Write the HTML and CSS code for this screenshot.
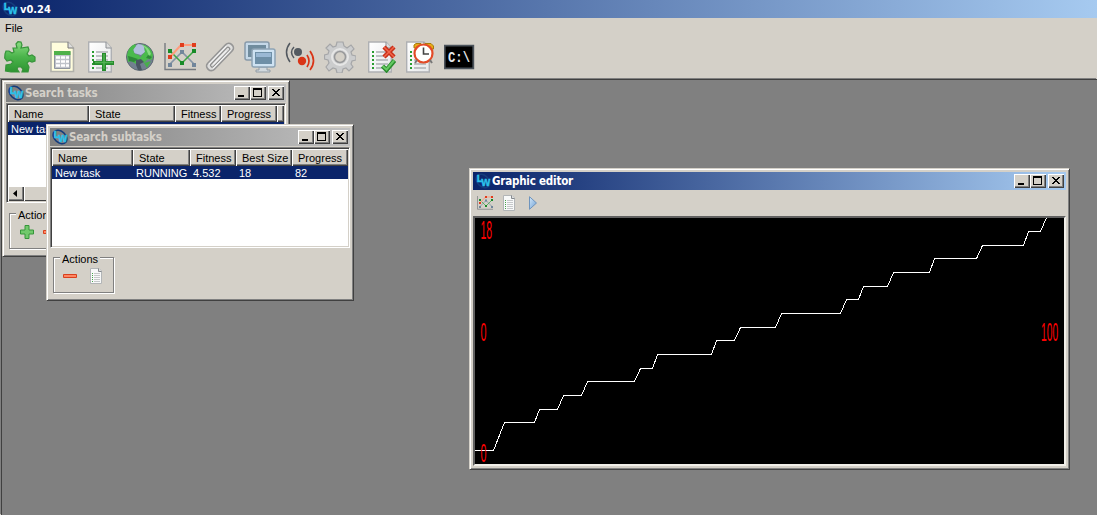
FILE: index.html
```html
<!DOCTYPE html>
<html lang="en">
<head>
<meta charset="utf-8">
<title>v0.24</title>
<link rel="stylesheet" href="styles.css">
</head>
<body>
<svg class="defs" aria-hidden="true">
  <defs>
    <linearGradient id="green" x1="0" y1="0" x2="0" y2="1"><stop offset="0" stop-color="#8bdc82"/><stop offset=".5" stop-color="#4bb44b"/><stop offset="1" stop-color="#2e9432"/></linearGradient>
    <linearGradient id="paper" x1="0" y1="0" x2="1" y2="1"><stop offset="0" stop-color="#fff"/><stop offset="1" stop-color="#e6e8ea"/></linearGradient>
    <linearGradient id="blue" x1="0" y1="0" x2="1" y2="1"><stop offset="0" stop-color="#d4e8fa"/><stop offset="1" stop-color="#6ea0d4"/></linearGradient>
    <symbol id="logo" viewBox="0 0 16 16">
      <ellipse cx="8" cy="8" rx="7.8" ry="5.6" transform="rotate(42 8 8)" fill="none" stroke="#153c7c" stroke-width="1.5"/>
      <text class="mark" x="1.500" y="9">L</text>
      <text class="mark" x="6" y="12.500" textLength="9.500" lengthAdjust="spacingAndGlyphs">W</text>
    </symbol>
    <symbol id="chart" viewBox="0 0 32 32">
      <path d="M1 2V28.500H32" fill="none" stroke="#777b80" stroke-width="1.4"/>
      <path d="M6 23L18 11L31 24" fill="none" stroke="#8494a5" stroke-width="1.600"/>
      <path d="M6 10L18 22L31 9" fill="none" stroke="#3fa545" stroke-width="1.500"/>
      <path d="M6 16L17 4H31" fill="none" stroke="#ff9b7c" stroke-width="2"/>
      <path d="M4 22h4v4H4zM16 9h4v4h-4zM28 22h4v4h-4z" fill="#71869b"/>
      <path d="M4 8h4v4H4zM16 20h4v4h-4zM28 8h4v4h-4z" fill="#188b28"/>
      <path d="M4 14h4v4H4zM16 2h4v4h-4zM28 2h4v4h-4z" fill="#e03c1c"/>
    </symbol>
    <symbol id="list" viewBox="0 0 24 32">
      <path d="M.7 1H18L23.300 7V31H.7Z" fill="url(#paper)" stroke="#aeb0b3" stroke-width="1.400"/>
      <path d="M18 1V7H23.300" fill="#ddd" stroke="#8b8f94"/>
      <path d="M4 11h2M4 15h2M4 19h2M4 23h2M4 27h2" stroke="#299c32" stroke-width="2"/>
      <path d="M8 11h12M8 15h12M8 19h12M8 23h12M8 27h12" stroke="#bec1c4" stroke-width="1.800"/>
    </symbol>
    <symbol id="list-small" viewBox="0 0 12 16">
      <path d="M.5.5H9L11.500 3V15.500H.5Z" fill="#f8f9f9" stroke="#b2b5b7"/>
      <path d="M8.500.5V3.500H11.500" fill="#ddd" stroke="#85898d"/>
      <path d="M2 5.500h1M2 7.500h1M2 9.500h1M2 11.500h1M2 13.500h1" stroke="#45a44a"/>
      <path d="M4 5.500h6M4 7.500h6M4 9.500h6M4 11.500h6M4 13.500h6" stroke="#c6c8ca"/>
    </symbol>
    <symbol id="minus" viewBox="0 0 14 4"><path d="M.5.5h13v3H.5z" fill="#ff8663" stroke="#d8401d"/></symbol>
    <symbol id="min" viewBox="0 0 16 14"><path d="M4 9h6v2H4z"/></symbol>
    <symbol id="max" viewBox="0 0 16 14"><path d="M3 2h9v9H3zM4 4v6h7V4z" fill-rule="evenodd"/></symbol>
    <symbol id="close" viewBox="0 0 16 14"><path d="M4 3h2v1h1v1h2V4h1V3h2v1h-1v1h-1v1H9v1h1v1h1v1h1v1h-2V9H9V8H7v1H6v1H4V9h1V8h1V7h1V6H6V5H5V4H4z"/></symbol>
  </defs>
</svg>
<div class="app">
  <header class="app-title"><svg class="logo"><use href="#logo"/></svg><span>v0.24</span></header>
  <nav class="menu"><span>File</span></nav>
  <div class="toolbar">
    <svg viewBox="0 0 32 32"><path d="M1 13L2 10H5L8 12L10 11L9 7H13L12 3L14 .7L17 1L18 4L17 7L24 6L25 9L23 13L25 15L28 14L31 16V20L28 21L25 20L23 22L25 26L24 31H18L19 28L17 26L14 26L13 28L15 31L7 31L1.500 30L2 24L7 23L9 21L7 19L3 20L.7 17Z" fill="url(#green)" stroke="#37943a" stroke-width="1.2"/></svg>
    <svg viewBox="0 0 32 32"><path d="M7 1H24L29.500 7V30.500H7Z" fill="#fffddc" stroke="#b1b1ab" stroke-width="1.6"/><path d="M24 1V7H29.500" fill="#ddd" stroke="#777"/><path d="M10.500 10.500H26V27.500H10.500Z" fill="#bfc3ca" stroke="#8f959f"/><path d="M10 10H26.500V14H10Z" fill="#4fb14a"/><path d="M12 16.500h4M17 16.500h4M22 16.500h3M12 20.500h4M17 20.500h4M22 20.500h3M12 24.500h4M17 24.500h4M22 24.500h3" stroke="#fff" stroke-width="2.4"/></svg>
    <svg viewBox="0 0 32 32"><use href="#list" x="4" y="0" width="24" height="32"/><path d="M20 12V30M9 22H30" stroke="#258b2b" stroke-width="4"/><path d="M20 13V28M11 21.500H29" stroke="#50b253" stroke-width="1.500"/></svg>
    <svg viewBox="0 0 32 32"><circle cx="16" cy="16" r="13.500" fill="#71808f" stroke="#5e6973"/><path d="M9 7L14 3L20 4L21 11L17 14L10 12Z" fill="#b2bfdc"/><path d="M3 14Q4 6 11 3L12 5L9 9L11 13L15 14L17 18L12 23L7 20L4 21ZM17 3Q27 5 29 14L28 19L24 18L20 22L15 19L18 14L21 11L20 5Z" fill="#4aba4d"/><path d="M18 4Q25 6 27 13L25 15L22 8Z" fill="#86da80"/><path d="M4 15L8 16L14 18L10 21L5 20ZM24 14L28 16L26 18L22 17Z" fill="#2e8938"/><path d="M12 19L17 18L20 21L16 23L18 29H14L12 24Z" fill="#4a5663"/><path d="M20 22L27 20L23 27Z" fill="#48ae4b"/></svg>
    <svg viewBox="0 0 32 32"><use href="#chart"/></svg>
    <svg viewBox="0 0 32 32"><g transform="rotate(-46 16 16)" fill="none"><rect x="-1" y="11.500" width="34" height="9" rx="4" stroke="#969696" stroke-width="1.700" fill="#dededd"/><rect x="3" y="14.500" width="26" height="3.500" rx="1.500" stroke="#8b8b8b" stroke-width="1.200"/><path d="M3 13H28M6 16.300H25M3 19H28" stroke="#f5f5f5"/></g></svg>
    <svg viewBox="0 0 32 32"><rect x="1" y="1" width="24" height="18" rx="2" fill="#c5d8e8" stroke="#8799a9" stroke-width="1.500"/><rect x="4" y="4" width="18" height="12" fill="#708c9e"/><path d="M15 26h8v3h3v2H12v-2h3z" fill="#d2d9de" stroke="#929ca5"/><rect x="8" y="8" width="23" height="18" rx="2" fill="#cee2f2" stroke="#8da3b4" stroke-width="1.500"/><rect x="11" y="11" width="17" height="12" fill="#6e8fa7"/><path d="M12 12H27V16H12Z" fill="#9ab8d4"/></svg>
    <svg viewBox="0 0 32 32"><g fill="none" stroke="#52585f" stroke-width="1.500"><path d="M6 2Q-1 11 6 21M10 6Q5 11 10 17"/></g><circle cx="14" cy="11" r="4" fill="#535a61"/><circle cx="18" cy="20" r="4.200" fill="#d93416"/><g fill="none" stroke="#d93416" stroke-width="1.700"><path d="M23 14Q27 20 23 26M26 10Q33 20 26 29"/></g></svg>
    <svg viewBox="0 0 32 32"><path d="M13 1H19L20 5L23 7L27 4L30 8L27 11L28 14L32 15V19L28 20L27 23L29 26L25 30L22 27L19 28L18 32H13L12 28L9 27L5 30L2 26L5 22L4 19L.5 18V14L4 13L5 10L2 7L6 3L9 6L12 5Z" fill="#cbcccd" stroke="#a5a6a8" stroke-width="1.200"/><circle cx="16" cy="16" r="8" fill="none" stroke="#e6e6e6" stroke-width="2"/><circle cx="16" cy="16" r="5.500" fill="#d4d0c8" stroke="#98999b" stroke-width="1.500"/></svg>
    <svg viewBox="0 0 32 32"><use href="#list" x="4" y="0" width="24" height="32"/><path d="M20 6L30 16M30 6L20 16" stroke="#c92f18" stroke-width="4.500"/><path d="M20 6L30 16M30 6L20 16" stroke="#f1674c" stroke-width="1.500"/><path d="M18.500 25L22.500 29L30.500 19.500" fill="none" stroke="#2b8c2e" stroke-width="4.500"/><path d="M18.500 25L22.500 28.500L30 19.500" fill="none" stroke="#65c963" stroke-width="2"/></svg>
    <svg viewBox="0 0 32 32"><use href="#list" x="2" y="0" width="24" height="32"/><path d="M10 7V4L12 2.500H17L19 5L21 2.500H27L29.500 5V8Z" fill="#e8ad16" stroke="#a97a0d"/><circle cx="19.500" cy="12.500" r="9" fill="#fff" stroke="#e34b28" stroke-width="2.200"/><path d="M19.500 6.500V13H25" fill="none" stroke="#444" stroke-width="1.600"/><path d="M13 19L11 22M26 19L28 22" stroke="#777" stroke-width="2"/></svg>
    <svg viewBox="0 0 32 32"><path d="M.7 4.700H29.300V27.300H.7Z" fill="#000" stroke="#4b535b" stroke-width="1.800"/><text class="prompt" x="4" y="21" textLength="22" lengthAdjust="spacingAndGlyphs">C:\</text></svg>
  </div>
  <main class="desktop">
    <section class="window tasks">
      <div class="caption inactive"><svg class="logo"><use href="#logo"/></svg><h2>Search tasks</h2><svg class="btn"><use href="#min"/></svg><svg class="btn"><use href="#max"/></svg><svg class="btn last"><use href="#close"/></svg></div>
      <div class="list">
        <div class="row head"><span>Name</span><span>State</span><span>Fitness</span><span>Progress</span><span></span></div>
        <div class="row selected"><span>New task</span></div>
        <div class="scroll"><svg class="arrow" viewBox="0 0 16 15"><path d="M9 4v7L5 7.500z"/></svg><i></i></div>
      </div>
      <div class="actions"><span class="legend">Actions</span>
        <svg class="plus" viewBox="0 0 14 14"><path d="M5 .5H9V5H13.500V9H9V13.500H5V9H.5V5H5Z" fill="#71c96c" stroke="#36963a"/></svg>
        <svg class="minus"><use href="#minus"/></svg>
      </div>
    </section>
    <section class="window subtasks">
      <div class="caption inactive"><svg class="logo"><use href="#logo"/></svg><h2>Search subtasks</h2><svg class="btn"><use href="#min"/></svg><svg class="btn"><use href="#max"/></svg><svg class="btn last"><use href="#close"/></svg></div>
      <div class="list">
        <div class="row head"><span>Name</span><span>State</span><span>Fitness</span><span>Best Size</span><span>Progress</span></div>
        <div class="row selected"><span>New task</span><span>RUNNING</span><span>4.532</span><span>18</span><span>82</span></div>
      </div>
      <div class="actions"><span class="legend">Actions</span>
        <svg class="minus"><use href="#minus"/></svg>
        <svg class="doc"><use href="#list-small"/></svg>
      </div>
    </section>
    <section class="window editor">
      <div class="caption"><svg class="logo"><use href="#logo"/></svg><h2>Graphic editor</h2><svg class="btn"><use href="#min"/></svg><svg class="btn"><use href="#max"/></svg><svg class="btn last"><use href="#close"/></svg></div>
      <div class="tools">
        <svg class="mini-chart"><use href="#chart"/></svg>
        <svg class="doc"><use href="#list-small"/></svg>
        <svg class="play" viewBox="0 0 8 14"><path d="M.5.700L7.500 7L.5 13.300Z" fill="url(#blue)" stroke="#6f94bd"/></svg>
      </div>
      <svg class="plot" viewBox="475 218 589 246">
        <polyline transform="translate(.5 .5)" points="474,450 493,450 504,422 534,422 539,409 557,409 563,395 581,395 587,381 634,381 640,368 652,368 657,354 711,354 716,340 734,340 740,327 775,327 781,313 840,313 846,299 858,299 863,286 887,286 893,272 929,272 934,258 976,258 982,245 1023,245 1028,231 1040,231 1046,217"/>
        <text transform="translate(480.500 239) scale(.42 1)">18</text>
        <text transform="translate(480.500 341) scale(.43 1)">0</text>
        <text transform="translate(480.500 462) scale(.43 1)">0</text>
        <text transform="translate(1041 341) scale(.41 1)">100</text>
      </svg>
    </section>
  </main>
</div>
</body>
</html>
```
FILE: styles.css
```css
* { box-sizing: border-box; }
body { margin: 0; overflow: hidden; background: #d4d0c8; color: #000; font: 11px/13px "Liberation Sans", Arial, sans-serif; }
svg { display: block; flex: none; }
.defs { position: absolute; width: 0; height: 0; }
.app { width: 1097px; height: 515px; display: flex; flex-direction: column; }
.app-title { height: 18px; flex: none; display: flex; align-items: center; gap: 2px; padding-left: 2px; background: linear-gradient(90deg, #0a246a, #a6caf0); color: #fff; font: bold 11px/18px "DejaVu Sans Condensed", "DejaVu Sans", sans-serif; }
.app-title span { padding-top: 2px; }
.logo { width: 16px; height: 16px; }
.mark { font: bold 9px "DejaVu Sans", sans-serif; fill: #2bc0ea; stroke: #2bc0ea; stroke-width: .3px; }
.menu { height: 20px; flex: none; padding: 4px 5px; }
.toolbar { height: 41px; flex: none; display: flex; gap: 8px; padding: 3px 4px; }
.toolbar svg { width: 32px; height: 32px; }
.prompt { font: bold 15px "Liberation Mono", monospace; fill: #e3e7eb; }
.desktop { position: relative; flex: 1; overflow: hidden; background: #808080; border: solid #404040; border-width: 1px 0 0 1px; margin-left: 1px; box-shadow: -1px -1px #808080; }

/* Windows are placed freely on the desktop */
.window { position: absolute; background: #d4d0c8; padding: 3px; border: 1px solid; border-color: #d4d0c8 #404040 #404040 #d4d0c8; box-shadow: inset 1px 1px #fff, inset -1px -1px #808080; }
.tasks { left: 0; top: 0; width: 288px; height: 177px; }
.subtasks { left: 44px; top: 44px; width: 308px; height: 177px; }
.editor { left: 467px; top: 88px; width: 601px; height: 302px; }
.caption { height: 18px; display: flex; align-items: center; padding: 0 2px; margin-bottom: 1px; background: linear-gradient(90deg, #0a246a, #a6caf0); color: #fff; }
.caption.inactive { background: linear-gradient(90deg, #808080, #c0c0c0); color: #d4d0c8; }
.caption h2 { flex: 1; margin: 0 0 0 1px; font: bold 11.500px/18px "DejaVu Sans Condensed", "DejaVu Sans", sans-serif; letter-spacing: -.2px; white-space: nowrap; }
.btn, .arrow { background: #d4d0c8; box-shadow: inset 1px 1px #fff, inset -1px -1px #404040, inset -2px -2px #808080; }
.btn { width: 16px; height: 14px; }
.btn.last { margin-left: 2px; }
.list { background: #fff; border: 1px solid; border-color: #808080 #fff #fff #808080; box-shadow: inset 1px 1px #404040, inset -1px -1px #d4d0c8; padding: 1px; display: flex; flex-direction: column; overflow: hidden; }
.subtasks .list { height: 101px; }
.tasks .list { height: 100px; }
.row { display: grid; flex: none; white-space: nowrap; }
.subtasks .row { grid-template-columns: 81px 57px 46px 56px 56px; }
.tasks .row { grid-template-columns: 81px 86px 46px 56px 7px; }
.head { height: 17px; background: #d4d0c8; }
.head span { height: 17px; padding: 3px 0 0 6px; box-shadow: inset 1px 1px #fff, inset -1px -1px #404040, inset -2px -2px #808080; }
.head span:empty { padding: 0; }
.selected { height: 13px; background: #0a246a; color: #fff; line-height: 15px; }
.selected span { padding-left: 3px; }
.scroll { margin-top: auto; height: 15px; display: flex; background: #d4d0c8; }
.arrow { width: 16px; height: 15px; }
.scroll i { flex: 1; box-shadow: inset 1px 1px #fff, inset -1px -1px #404040; }
.actions { position: relative; display: flex; border: 1px solid #808080; box-shadow: 1px 1px #fff, inset 1px 1px #fff; }
/* The legend sits over the group border */
.legend { position: absolute; left: 6px; top: -5px; padding: 0 2px; background: #d4d0c8; }
.tasks .actions { width: 90px; height: 36px; margin: 10px 0 0 3px; padding: 11px 10px; gap: 9px; }
.subtasks .actions { width: 61px; height: 36px; margin: 9px 0 0 3px; padding: 10px 9px; gap: 13px; }
.plus { width: 14px; height: 14px; }
.minus { width: 14px; height: 4px; margin-top: 6px; }
.tasks .minus { margin-top: 5px; }
.doc { width: 12px; height: 16px; }
.tools { height: 25px; display: flex; align-items: center; padding: 0 4px 2px; gap: 10px; }
.mini-chart { width: 16px; height: 16px; }
.play { width: 8px; height: 14px; margin-left: 4px; }
.plot { width: 593px; height: 250px; background: #000; border: 2px solid; border-color: #606060 #f0eee8 #f0eee8 #606060; }
.plot polyline { fill: none; stroke: #fff; stroke-width: 1; shape-rendering: crispEdges; }
.plot text { font: 25px "Liberation Sans", Arial, sans-serif; fill: #f00; }
```
